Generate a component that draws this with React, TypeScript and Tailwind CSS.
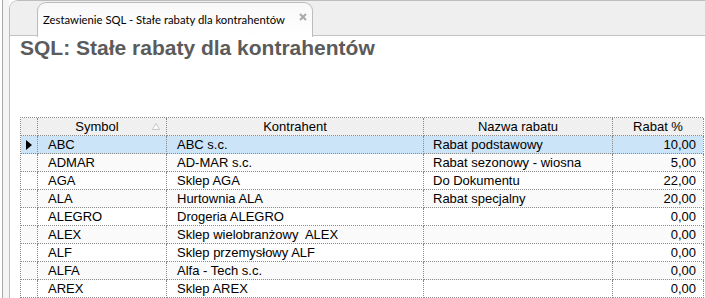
import React from "react";

const rows = [
  ["ABC", "ABC s.c.", "Rabat podstawowy", "10,00"],
  ["ADMAR", "AD-MAR s.c.", "Rabat sezonowy - wiosna", "5,00"],
  ["AGA", "Sklep AGA", "Do Dokumentu", "22,00"],
  ["ALA", "Hurtownia ALA", "Rabat specjalny", "20,00"],
  ["ALEGRO", "Drogeria ALEGRO", "", "0,00"],
  ["ALEX", "Sklep wielobranżowy  ALEX", "", "0,00"],
  ["ALF", "Sklep przemysłowy ALF", "", "0,00"],
  ["ALFA", "Alfa - Tech s.c.", "", "0,00"],
  ["AREX", "Sklep AREX", "", "0,00"],
];

const cell = "border-r border-b border-dotted border-[#8a8a8a] h-[18px] flex items-center whitespace-pre overflow-hidden";

export default function App() {
  return (
    <div className="w-[705px] h-[298px] overflow-hidden flex bg-white" style={{ fontFamily: '"Liberation Sans", Arial, sans-serif' }}>
      <div className="w-[9px] flex shrink-0">
        <div className="w-[2px]" />
        <div className="w-px bg-[#a8a8a8]" />
        <div className="flex-1 bg-[#f4f4f4]" />
      </div>
      <div className="flex-1 flex flex-col border-l border-t border-[#bdbdbd] rounded-tl-[9px] overflow-hidden">
        <div className="h-[35px] bg-[#efefef] border-b border-[#c3c3c3] pl-[27px] pt-[1px] flex items-start shrink-0">
          <div className="relative w-[276px] h-[35px] -mb-px bg-gradient-to-b from-[#f8f8f8] to-white border border-b-0 border-[#bcbcbc] rounded-t-[9px]">
            <span className="absolute left-[5px] top-[10px] text-[11.3px] leading-[14px] text-black whitespace-nowrap" style={{ fontFamily: 'Lato, "Noto Sans", sans-serif' }}>
              Zestawienie SQL - Stałe rabaty dla kontrahentów
            </span>
            <svg className="absolute left-[261px] top-[10px]" width="8" height="8" viewBox="0 0 8 8">
              <path d="M1 1 L7 7 M7 1 L1 7" stroke="#a9a9a9" strokeWidth="2" />
            </svg>
          </div>
        </div>
        <div className="pl-[10px] flex flex-col">
          <div className="text-[21px] leading-[23px] font-bold text-[#5b5b5b] whitespace-nowrap">SQL: Stałe rabaty dla kontrahentów</div>
          <div className="mt-[58px] w-[683px] border-l border-t border-dotted border-[#8a8a8a] text-[13px] text-black">
            <div className="grid grid-cols-[17px_129px_257px_189px_91px] bg-[#f0f0f0]">
              <div className={cell} />
              <div className={cell + " justify-center relative"}>
                <span className="mr-[10px]">Symbol</span>
                <svg className="absolute left-[114px] top-[5px]" width="8" height="7" viewBox="0 0 8 7">
                  <path d="M4 0.5 L7.5 6.5 L0.5 6.5 Z" fill="#ffffff" stroke="#c6c6c6" strokeWidth="1" />
                </svg>
              </div>
              <div className={cell + " justify-center"}>Kontrahent</div>
              <div className={cell + " justify-center"}>Nazwa rabatu</div>
              <div className={cell + " justify-center"}>Rabat %</div>
            </div>
            {rows.map((r, i) => {
              const bg = i === 0 ? "bg-[#cce4f7]" : i % 2 === 0 ? "bg-white" : "bg-[#fafafa]";
              return (
                <div key={i} className={"grid grid-cols-[17px_129px_257px_189px_91px] " + bg}>
                  <div className={cell + " justify-center"}>
                    {i === 0 && (
                      <svg width="6" height="10" viewBox="0 0 6 10">
                        <path d="M0 0 L6 5 L0 10 Z" fill="#000" />
                      </svg>
                    )}
                  </div>
                  <div className={cell + " pl-[10px]"}>{r[0]}</div>
                  <div className={cell + " pl-[10px]"}>{r[1]}</div>
                  <div className={cell + " pl-[9px]"}>{r[2]}</div>
                  <div className={cell + " justify-end pr-[7px]"}>{r[3]}</div>
                </div>
              );
            })}
          </div>
        </div>
      </div>
    </div>
  );
}
